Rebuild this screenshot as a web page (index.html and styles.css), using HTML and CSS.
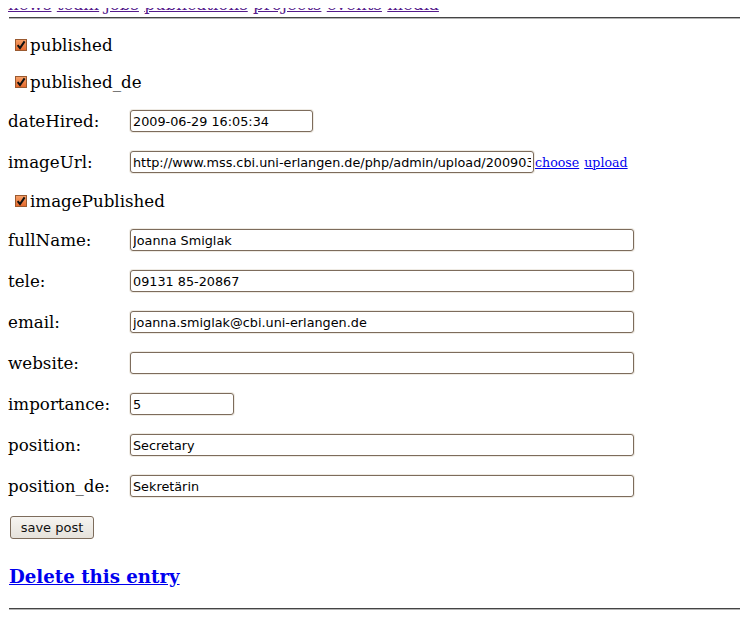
FILE: index.html
```html
<!DOCTYPE html>
<html>
<head>
<meta charset="utf-8">
<link rel="stylesheet" href="styles.css">
</head>
<body>
<nav class="nav"><a href="#">news</a> <a href="#">team</a> <a href="#">jobs</a> <a href="#">publications</a> <a href="#">projects</a> <a href="#">events</a> <a href="#">media</a></nav>
<div class="rule"></div>
<form class="form">
  <div class="check-row"><span class="box"><svg viewBox="0 0 12 12" width="12" height="12"><defs><linearGradient id="g" x1="0" y1="0" x2="0" y2="1"><stop offset="0" stop-color="#f7a26a"/><stop offset="1" stop-color="#e4672b"/></linearGradient></defs><rect x="0.5" y="0.5" width="11" height="11" fill="url(#g)" stroke="#9a5a30"/><path d="M2.6 6.2 L5 9 L9.6 2.4" fill="none" stroke="#111" stroke-width="2"/></svg></span><span>published</span></div>
  <div class="check-row"><span class="box"><svg viewBox="0 0 12 12" width="12" height="12"><rect x="0.5" y="0.5" width="11" height="11" fill="url(#g)" stroke="#9a5a30"/><path d="M2.6 6.2 L5 9 L9.6 2.4" fill="none" stroke="#111" stroke-width="2"/></svg></span><span>published_de</span></div>
  <div class="row"><label class="lbl">dateHired:</label><input class="field w-date" value="2009-06-29 16:05:34"></div>
  <div class="row"><label class="lbl">imageUrl:</label><input class="field w-url" value="http://www.mss.cbi.uni-erlangen.de/php/admin/upload/20090316_joanna.jpg"><a class="small" href="#">choose</a> <a class="small" href="#">upload</a></div>
  <div class="check-row"><span class="box"><svg viewBox="0 0 12 12" width="12" height="12"><rect x="0.5" y="0.5" width="11" height="11" fill="url(#g)" stroke="#9a5a30"/><path d="M2.6 6.2 L5 9 L9.6 2.4" fill="none" stroke="#111" stroke-width="2"/></svg></span><span>imagePublished</span></div>
  <div class="row"><label class="lbl">fullName:</label><input class="field w-full" value="Joanna Smiglak"></div>
  <div class="row"><label class="lbl">tele:</label><input class="field w-full" value="09131 85-20867"></div>
  <div class="row"><label class="lbl">email:</label><input class="field w-full" value="joanna.smiglak@cbi.uni-erlangen.de"></div>
  <div class="row"><label class="lbl">website:</label><input class="field w-full" value=""></div>
  <div class="row"><label class="lbl">importance:</label><input class="field w-imp" value="5"></div>
  <div class="row"><label class="lbl">position:</label><input class="field w-full" value="Secretary"></div>
  <div class="row"><label class="lbl">position_de:</label><input class="field w-full" value="Sekretärin"></div>
  <div class="btn-row"><button type="button" class="btn">save post</button></div>
</form>
<h3 class="delete"><a href="#">Delete this entry</a></h3>
<div class="rule bottom"></div>
</body>
</html>
```
FILE: styles.css
```css
html {
  background: #fff;
  overflow: hidden;
}
body {
  margin: 8px;
  font-family: "DejaVu Serif", serif;
  font-size: 16.7px;
  color: #000;
}
.nav {
  margin-top: -13px;
  line-height: 19px;
  white-space: nowrap;
}
.nav a {
  color: #551a8b;
}
.rule {
  box-sizing: border-box;
  height: 2px;
  margin: 3px -24px 0 1px;
  border-top: 1px solid #444;
  border-bottom: 1px solid #b4b4b4;
}
.form {
  margin-top: 17px;
  display: flex;
  flex-direction: column;
  gap: 19px;
}
.check-row {
  height: 18px;
  display: flex;
  align-items: center;
  white-space: nowrap;
}
.box {
  width: 12px;
  height: 12px;
  margin-left: 7px;
  margin-right: 3px;
  display: inline-flex;
}
.row {
  height: 22px;
  display: flex;
  align-items: center;
  white-space: nowrap;
}
.lbl {
  width: 122px;
  flex: none;
}
.field {
  box-sizing: border-box;
  height: 22px;
  margin: 0;
  padding: 0 2px;
  border: 1px solid #7d6c5c;
  border-radius: 3px;
  box-shadow: 0 0 0 1px #efebe4;
  font-family: "DejaVu Sans", sans-serif;
  font-size: 12.8px;
  color: #000;
  background: #fff;
  flex: none;
  outline: none;
}
.w-date { width: 183px; }
.w-url { width: 404px; }
.w-full { width: 504px; }
.w-imp { width: 104px; }
.small {
  font-size: 12.6px;
  color: #0000ee;
  margin-right: 5px;
}
.row .small:first-of-type {
  margin-left: 1px;
}
.btn-row {
  height: 23px;
  display: flex;
}
.btn {
  box-sizing: border-box;
  height: 23px;
  width: 84px;
  margin: 0 0 0 2px;
  padding: 0;
  border: 1px solid #7d6c5c;
  border-radius: 3px;
  background: linear-gradient(#f6f4f1, #e6e2db);
  font-family: "DejaVu Sans", sans-serif;
  font-size: 13px;
  color: #111;
}
.delete {
  margin: 28px 0 0 1px;
  font-size: 18.2px;
  line-height: 20px;
  font-weight: bold;
}
.delete a {
  color: #0000ee;
}
.rule.bottom {
  margin-top: 21px;
}
```
